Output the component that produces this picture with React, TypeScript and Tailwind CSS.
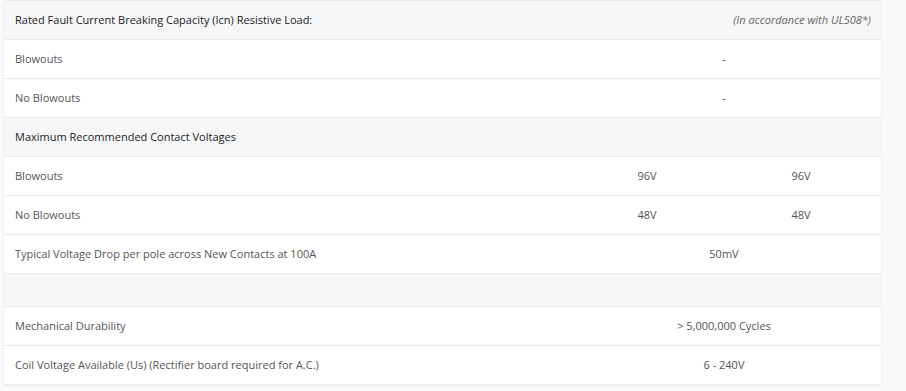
type Row =
  | { kind: "heading"; label: string; note?: string }
  | { kind: "pair"; label: string; a: string; b: string }
  | { kind: "span"; label: string; value: string }
  | { kind: "gap" };

const rows: Row[] = [
  {
    kind: "heading",
    label: "Rated Fault Current Breaking Capacity (Icn) Resistive Load:",
    note: "(In accordance with UL508*)",
  },
  { kind: "span", label: "Blowouts", value: "-" },
  { kind: "span", label: "No Blowouts", value: "-" },
  { kind: "heading", label: "Maximum Recommended Contact Voltages" },
  { kind: "pair", label: "Blowouts", a: "96V", b: "96V" },
  { kind: "pair", label: "No Blowouts", a: "48V", b: "48V" },
  { kind: "span", label: "Typical Voltage Drop per pole across New Contacts at 100A", value: "50mV" },
  { kind: "gap" },
  { kind: "span", label: "Mechanical Durability", value: "> 5,000,000 Cycles" },
  { kind: "span", label: "Coil Voltage Available (Us) (Rectifier board required for A.C.)", value: "6 - 240V" },
];

function SpecRow({ row }: { row: Row }) {
  if (row.kind === "gap") {
    return <div className="h-[33px] bg-[#f5f6f8] border-b border-[#e9eaec]" />;
  }
  if (row.kind === "heading") {
    return (
      <div className="h-[39px] bg-[#f5f6f8] border-b border-[#e9eaec] flex items-center justify-between pl-[11px] pr-[10px]">
        <span className="text-[#1c1c1c] text-[11px]">{row.label}</span>
        {row.note && <span className="italic text-[#666] text-[11px]">{row.note}</span>}
      </div>
    );
  }
  return (
    <div className="h-[39px] bg-white border-b border-[#e9eaec] flex items-center text-[11px] text-[#555]">
      <span className="w-[566px] shrink-0 pl-[11px]">{row.label}</span>
      {row.kind === "pair" ? (
        <>
          <span className="w-[154px] text-center">{row.a}</span>
          <span className="w-[154px] text-center">{row.b}</span>
        </>
      ) : (
        <span className="w-[308px] text-center">{row.value}</span>
      )}
    </div>
  );
}

export default function App() {
  return (
    <div
      className="w-[906px] h-[391px] bg-[#fafafa] overflow-hidden pl-[4px]"
      style={{ fontFamily: '"Open Sans", "Liberation Sans", sans-serif' }}
    >
      <div className="w-[877px] border-t border-[#e9eaec] shadow-[0_1px_3px_rgba(0,0,0,0.06)]">
        {rows.map((row, i) => (
          <SpecRow key={i} row={row} />
        ))}
      </div>
    </div>
  );
}
